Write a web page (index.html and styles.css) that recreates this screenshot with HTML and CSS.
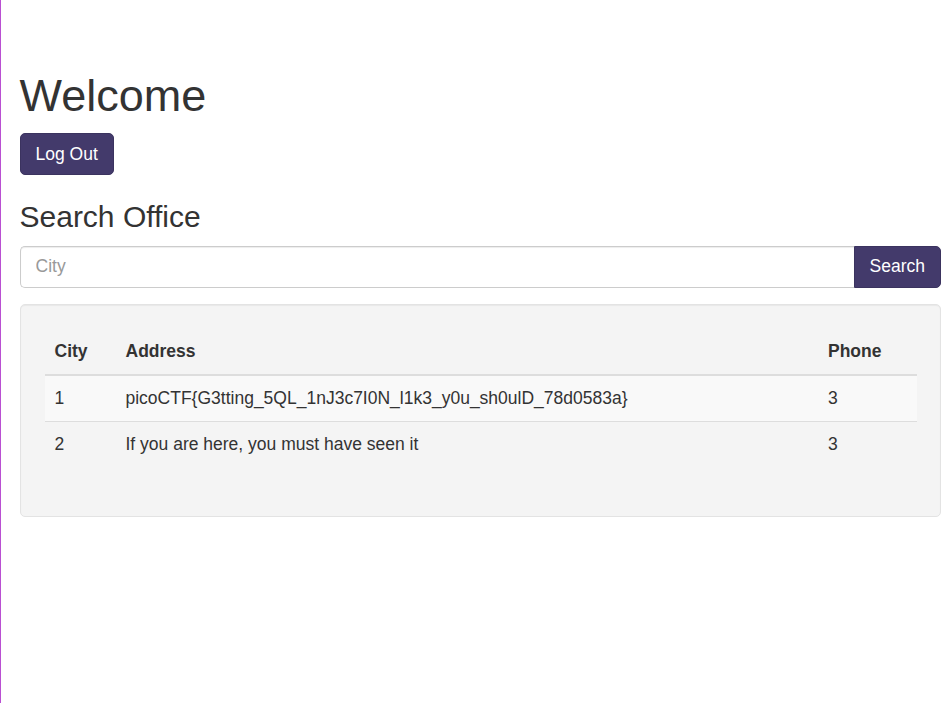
FILE: index.html
```html
<!DOCTYPE html>
<html>
<head>
<meta charset="utf-8">
<title>Welcome</title>
<link rel="stylesheet" href="styles.css">
</head>
<body>
<div class="page">
  <div class="container">
    <h1 class="title">Welcome</h1>
    <button class="btn">Log Out</button>
    <h3 class="subtitle">Search Office</h3>
    <form class="input-group">
      <input class="form-control" type="text" placeholder="City">
      <button class="btn btn-search" type="button">Search</button>
    </form>
    <div class="well">
      <table class="table">
        <thead>
          <tr><th class="c-city">City</th><th class="c-addr">Address</th><th class="c-phone">Phone</th></tr>
        </thead>
        <tbody>
          <tr class="striped"><td>1</td><td>picoCTF{G3tting_5QL_1nJ3c7I0N_l1k3_y0u_sh0ulD_78d0583a}</td><td>3</td></tr>
          <tr><td>2</td><td>If you are here, you must have seen it</td><td>3</td></tr>
        </tbody>
      </table>
    </div>
  </div>
</div>
</body>
</html>
```

FILE: styles.css
```css
html, body {
  margin: 0;
  padding: 0;
  background: #fff;
}
body {
  font-family: "Liberation Sans", Arial, Helvetica, sans-serif;
  font-size: 17.5px;
  line-height: 25px;
  color: #333;
}
.page {
  border-left: 1.5px solid #b94fd2;
  min-height: 703px;
  box-sizing: border-box;
}
.container {
  padding: 46px 3px 0 18.5px;
}
.title {
  font-size: 45px;
  font-weight: 500;
  line-height: 49.5px;
  margin: 25px 0 12.5px;
}
.subtitle {
  font-size: 30px;
  font-weight: 500;
  line-height: 33px;
  margin: 25px 0 12.5px;
}
.btn {
  display: inline-block;
  font-family: inherit;
  font-size: 17.5px;
  line-height: 25px;
  padding: 7.5px 15px;
  color: #fff;
  background: #433a6b;
  border: 1px solid #3b335f;
  border-radius: 5px;
  cursor: pointer;
}
.input-group {
  display: flex;
  margin: 0;
}
.form-control {
  flex: 1;
  min-width: 0;
  height: 42.5px;
  box-sizing: border-box;
  padding: 7.5px 15px;
  font-family: inherit;
  font-size: 17.5px;
  color: #555;
  border: 1px solid #ccc;
  border-right: 0;
  border-radius: 5px 0 0 5px;
  box-shadow: inset 0 1px 1px rgba(0,0,0,.075);
  outline: none;
}
.form-control::placeholder {
  color: #999;
}
.btn-search {
  border-radius: 0 5px 5px 0;
  height: 42.5px;
}
.well {
  margin-top: 16px;
  padding: 24px 23px 23.5px 24px;
  background: #f4f4f4;
  border: 1px solid #e3e3e3;
  border-radius: 5px;
  box-shadow: inset 0 1px 1px rgba(0,0,0,.05);
}
.table {
  width: 100%;
  border-collapse: collapse;
  border-spacing: 0;
  margin-bottom: 25px;
}
.table th, .table td {
  padding: 10px;
  text-align: left;
  vertical-align: top;
  line-height: 25px;
}
.table th {
  font-weight: bold;
  border-bottom: 2.5px solid #ddd;
}
.table td {
  border-top: 1px solid #ddd;
}
.table tbody tr:first-child td {
  border-top: 0;
}
.striped {
  background: #f9f9f9;
}
.c-city { width: 51px; }
.c-phone { width: 79px; }
```
